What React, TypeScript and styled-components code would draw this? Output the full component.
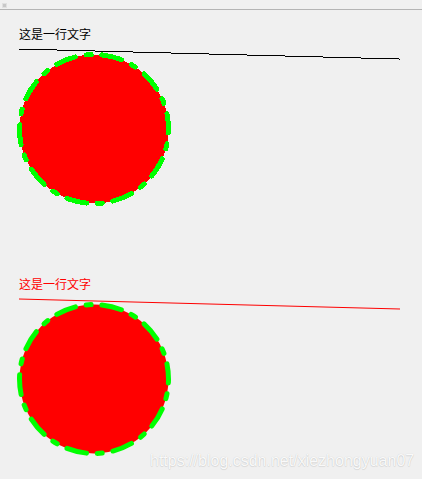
import React from "react";
import styled, { createGlobalStyle } from "styled-components";

const Global = createGlobalStyle`
  html, body { margin: 0; padding: 0; background: #f0f0f0; }
  #root { width: 422px; height: 479px; }
`;

const Window = styled.div`
  position: relative;
  width: 422px;
  height: 479px;
  overflow: hidden;
  background: #f0f0f0;
  display: flex;
  flex-direction: column;
`;

const TopBar = styled.div`
  flex: none;
  height: 10px;
  box-sizing: border-box;
  border-bottom: 1px solid #b4b4b4;
  display: flex;
  align-items: flex-start;
  padding: 3px 0 0 2px;
`;

const TinyIcon = styled.div`
  width: 3px;
  height: 3px;
  background: #c8c8c8;
  border: 1px solid #e0e0e0;
`;

const Block = styled.section`
  display: flex;
  flex-direction: column;
  flex: none;
  height: 250px;
  padding-top: 17px;
  box-sizing: border-box;
`;

const Label = styled.div<{ $color: string }>`
  margin-left: 19px;
  height: 14px;
  font-family: "Noto Sans CJK SC", "Liberation Sans", sans-serif;
  font-size: 12px;
  line-height: 14px;
  color: ${(p) => p.$color};
  -webkit-font-smoothing: none;
`;

const Drawing = styled.svg`
  display: block;
  width: 422px;
  height: 219px;
  flex: none;
`;

const Watermark = styled.div`
  position: absolute;
  left: 150px;
  top: 453px;
  font-family: "Liberation Sans", Arial, sans-serif;
  font-size: 16px;
  line-height: 16px;
  color: rgba(255, 255, 255, 0.92);
  text-shadow: 0 0 1px rgba(0, 0, 0, 0.18), 0 1px 1px rgba(0, 0, 0, 0.08);
  white-space: nowrap;
`;

// stepped (aliased) line: 10 horizontal runs of 38px, one pixel lower each
const steppedPath = (() => {
  let d = "";
  for (let i = 0; i < 10; i++) {
    const x = 19 + i * 38;
    d += `M${x} ${8.5 + i}h38`;
  }
  d += "M399 18.5h1";
  return d;
})();

const R = 74.5;
const C = 2 * Math.PI * R;
const GAP = (C / 10 - 25) / 2;

const Demo: React.FC<{ color: string; aliased: boolean }> = ({ color, aliased }) => (
  <Block>
    <Label $color={color}>这是一行文字</Label>
    <Drawing viewBox="0 0 422 219">
      {aliased ? (
        <path d={steppedPath} stroke={color} strokeWidth={1} fill="none" shapeRendering="crispEdges" />
      ) : (
        <line x1={19} y1={8} x2={400} y2={18} stroke={color} strokeWidth={1} />
      )}
      <circle
        cx={94}
        cy={88}
        r={R}
        fill="#ff0000"
        stroke="#00ff00"
        strokeWidth={5}
        strokeDasharray={`20 ${GAP} 5 ${GAP}`}
        strokeDashoffset={16}
        strokeLinecap="round"
        shapeRendering={aliased ? "crispEdges" : "auto"}
      />
    </Drawing>
  </Block>
);

export default function App() {
  return (
    <>
      <Global />
      <Window>
        <TopBar>
          <TinyIcon />
        </TopBar>
        <Demo color="#000000" aliased />
        <Demo color="#ff0000" aliased={false} />
        <Watermark>https://blog.csdn.net/xiezhongyuan07</Watermark>
      </Window>
    </>
  );
}
